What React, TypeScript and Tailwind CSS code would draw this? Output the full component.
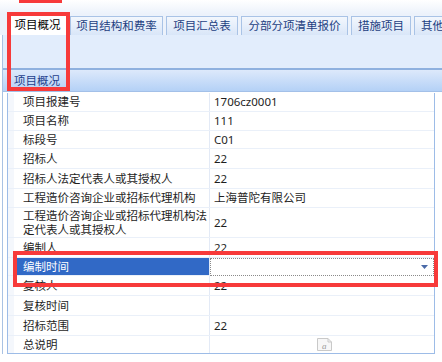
import React from 'react';

const tabs = [
  { label: '项目概况', w: 'w-[59px]', active: true },
  { label: '项目结构和费率', w: 'w-[93px]' },
  { label: '项目汇总表', w: 'w-[72px]' },
  { label: '分部分项清单报价', w: 'w-[107px]' },
  { label: '措施项目', w: 'w-[60px]' },
  { label: '其他项目', w: 'w-[60px]' },
];

type Row = { label: React.ReactNode; value?: string; h: string; selected?: boolean; memo?: boolean };

const rows: Row[] = [
  { label: '项目报建号', value: '1706cz0001', h: 'h-[19px]' },
  { label: '项目名称', value: '111', h: 'h-[19px]' },
  { label: '标段号', value: 'C01', h: 'h-[18px]' },
  { label: '招标人', value: '22', h: 'h-[20px]' },
  { label: '招标人法定代表人或其授权人', value: '22', h: 'h-[20px]' },
  { label: '工程造价咨询企业或招标代理机构', value: '上海普陀有限公司', h: 'h-[19px]' },
  {
    label: (
      <>
        工程造价咨询企业或招标代理机构法
        <br />
        定代表人或其授权人
      </>
    ),
    value: '22',
    h: 'h-[30px]',
  },
  { label: '编制人', value: '22', h: 'h-[20px]' },
  { label: '编制时间', h: 'h-[18px]', selected: true },
  { label: '复核人', value: '22', h: 'h-[20px]' },
  { label: '复核时间', value: '', h: 'h-[20px]' },
  { label: '招标范围', value: '22', h: 'h-[20px]' },
  { label: '总说明', h: 'h-[17px]', memo: true },
];

function MemoIcon() {
  return (
    <svg width="15" height="13" viewBox="0 0 15 13">
      <path d="M0.5 0.5 H11 L14.5 4 V12.5 H0.5 Z" fill="#f7f7f7" stroke="#c9c9c9" />
      <path d="M11 0.5 V4 H14.5" fill="none" stroke="#c9c9c9" />
      <text x="5" y="10.5" fontSize="9" fill="#9a9a9a" fontStyle="italic" fontFamily="Liberation Serif, serif">a</text>
    </svg>
  );
}

export default function App() {
  return (
    <div className="relative w-[442px] h-[362px] overflow-hidden bg-white text-[11.5px] text-[#1e1e1e] font-['Noto_Sans','Noto_Sans_CJK_SC',sans-serif]">
      {/* top strip */}
      <div className="h-[14px] bg-linear-to-b from-white to-[#ecf2fb]" />

      {/* tabs */}
      <div className="h-[21px] flex items-end gap-[3px] pl-[8px] bg-[#ecf2fb]">
        {tabs.map((t) =>
          t.active ? (
            <div
              key={t.label}
              className={`${t.w} shrink-0 h-[21px] flex items-center justify-center bg-white border border-b-0 border-[#9fbbe2] text-black`}
            >
              {t.label}
            </div>
          ) : (
            <div
              key={t.label}
              className={`${t.w} shrink-0 h-[19px] flex items-center justify-center whitespace-nowrap overflow-hidden bg-linear-to-b from-[#f3f7fd] to-[#d9e6f8] border border-b-0 border-[#a9c3e6] text-[#1d3f82]`}
            >
              {t.label}
            </div>
          )
        )}
      </div>

      <div className="ml-[2px] border-l border-[#a9c2e3]">
        {/* empty panel */}
        <div className="h-[33px] bg-[#e2edfc]" />
        <div className="h-[2px] bg-[#8fb1df]" />
        {/* section header */}
        <div className="h-[21px] flex items-center pl-[11px] bg-linear-to-b from-[#dde9fb] to-[#b4d1f6] text-[#1f3f8c]">
          项目概况
        </div>
        <div className="h-[1px] bg-[#a3c0e8]" />

        {/* property grid */}
        <div className="ml-[4px] mt-[1px] w-[428px] border border-t-0 border-[#9dbce7]">
          {rows.map((r, i) => (
            <div key={i} className={`${r.h} flex border-b border-[#eaf0f9] last:border-b-0`}>
              <div className="w-[6px] shrink-0 bg-[#f4f7fc]" />
              <div
                className={`w-[196px] shrink-0 flex items-center pl-[9px] whitespace-nowrap leading-[14px] border-r border-[#e3eaf6] ${
                  r.selected ? 'bg-[#3169c6] text-white' : ''
                }`}
              >
                <span>{r.label}</span>
              </div>
              <div className="flex-1 flex items-center">
                {r.selected ? (
                  <div className="w-full h-[18px] flex items-center justify-end pr-[5px] bg-white border border-dotted border-[#8a8a8a]">
                    <svg width="7" height="4" viewBox="0 0 7 4">
                      <path d="M0 0 H7 L3.5 4 Z" fill="#4a6aa8" />
                    </svg>
                  </div>
                ) : r.memo ? (
                  <div className="w-full flex justify-center pl-[4px]">
                    <MemoIcon />
                  </div>
                ) : (
                  <span className="pl-[4px]">{r.value}</span>
                )}
              </div>
            </div>
          ))}
        </div>
      </div>

      {/* annotation overlays */}
      <div className="absolute left-[19px] top-0 w-[43px] h-[3px] bg-[#f73a3a]" />
      <div className="absolute left-[7px] top-[12px] w-[63px] h-[79px] border-4 border-[#f73a3a]" />
      <div className="absolute left-[13px] top-[251px] w-[425px] h-[36px] border-4 border-[#f73a3a]" />
    </div>
  );
}
